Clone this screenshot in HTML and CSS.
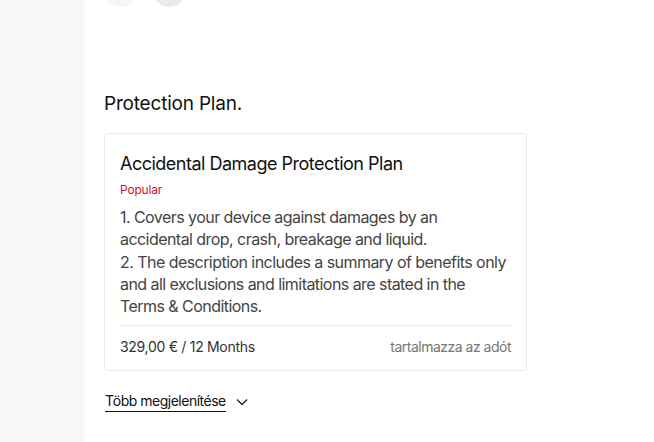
FILE: index.html
```html
<!DOCTYPE html>
<html lang="hu">
<head>
    <meta charset="utf-8">
    <title>Protection Plan</title>
    <link rel="stylesheet" href="styles.css">
</head>
<body>
<div class="page">
    <div class="sidebar"></div>
    <div class="main">
        <div class="dots">
            <span class="dot"></span>
            <span class="dot dot-dark"></span>
        </div>
        <h2 class="section-title">Protection Plan.</h2>
        <div class="plan-card">
            <h3 class="plan-name">Accidental Damage Protection Plan</h3>
            <div class="plan-badge">Popular</div>
            <p class="plan-desc">1. Covers your device against damages by an accidental drop, crash, breakage and liquid.<br>2. The description includes a summary of benefits only and all exclusions and limitations are stated in the Terms &amp; Conditions.</p>
            <div class="plan-foot">
                <span class="plan-price">329,00 € / 12 Months</span>
                <span class="plan-tax">tartalmazza az adót</span>
            </div>
        </div>
        <a class="more" href="#">
            <span class="more-text">Több megjelenítése</span>
            <svg width="14" height="14" viewBox="0 0 14 14"><path d="M2 4.5 L7 9.5 L12 4.5" fill="none" stroke="#222" stroke-width="1.3"/></svg>
        </a>
    </div>
</div>
</body>
</html>
```

FILE: styles.css
```css
body {
    margin: 0;
    background: #fff;
    font-family: Inter, "Liberation Sans", sans-serif;
    color: #111;
}
.page {
    display: flex;
    min-height: 442px;
}
.sidebar {
    width: 84px;
    background: #f8f8f8;
}
.main {
    flex: 1;
    padding-left: 20px;
}
.dots {
    display: flex;
    gap: 16px;
    margin-top: -25px;
    padding-left: 1px;
}
.dot {
    width: 32px;
    height: 32px;
    border-radius: 50%;
    background: #f5f5f5;
}
.dot-dark {
    background: #ebebeb;
}
.section-title {
    margin: 85px 0 0;
    font-size: 19px;
    font-weight: 400;
    line-height: 24px;
    letter-spacing: -0.2px;
}
.plan-card {
    margin-top: 17px;
    width: 391px;
    border: 1px solid #e8e8e8;
    border-radius: 4px;
    padding: 16px 15px 0;
}
.plan-name {
    margin: 2px 0 0;
    font-size: 18px;
    font-weight: 400;
    line-height: 24px;
    letter-spacing: -0.5px;
}
.plan-badge {
    margin-top: 6px;
    font-size: 12px;
    line-height: 16px;
    color: #d0102a;
    letter-spacing: -0.2px;
}
.plan-desc {
    margin: 8px 0 0;
    max-width: 390px;
    font-size: 16px;
    line-height: 22.3px;
    color: #444;
    letter-spacing: -0.55px;
}
.plan-foot {
    display: flex;
    justify-content: space-between;
    margin-top: 8px;
    border-top: 1px solid #e8e8e8;
    padding: 11px 0 13px;
    font-size: 14px;
    line-height: 20px;
    letter-spacing: -0.3px;
}
.plan-price {
    color: #333;
}
.plan-tax {
    color: #777;
    letter-spacing: -0.5px;
}
.more {
    display: inline-flex;
    align-items: center;
    gap: 9px;
    margin-top: 20px;
    margin-left: 1px;
    text-decoration: none;
    color: #111;
    font-size: 14px;
    line-height: 20px;
    letter-spacing: -0.5px;
}
.more-text {
    border-bottom: 1px solid #111;
}
```
